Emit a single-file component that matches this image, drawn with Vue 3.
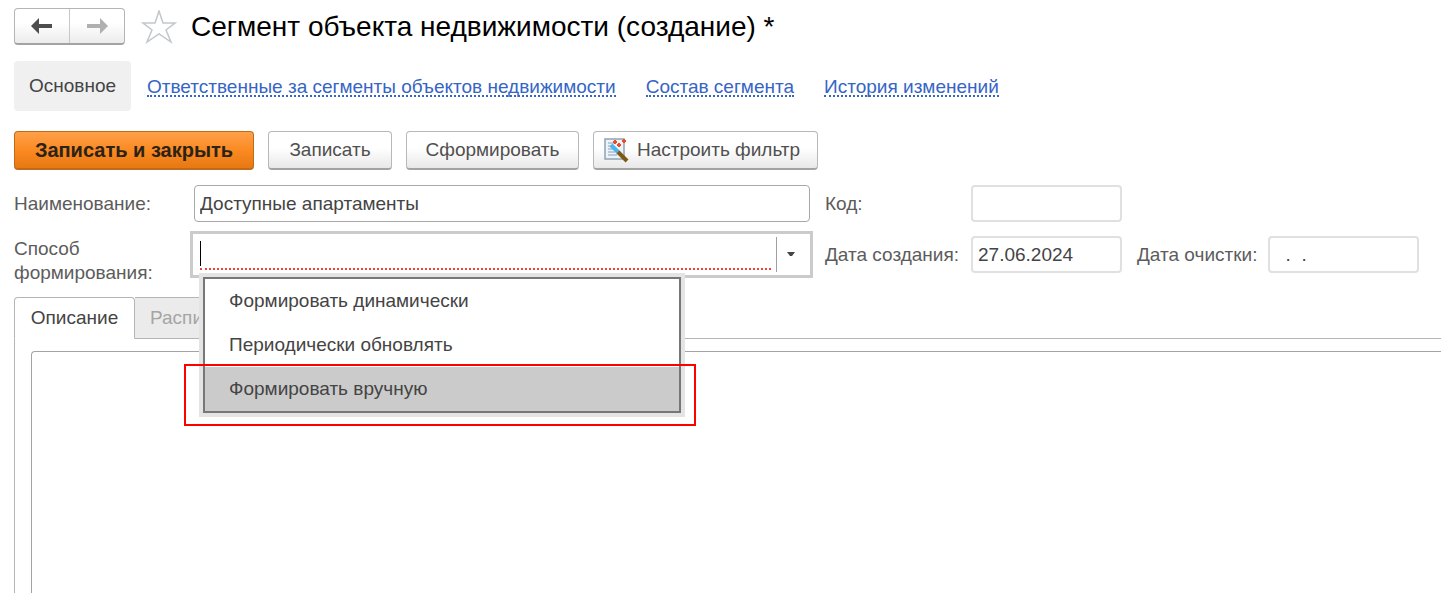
<template>
  <div class="form-page">
    <header class="title-bar">
      <div class="history-buttons">
        <button type="button" class="history-btn" aria-label="Назад">
          <svg width="22" height="18" viewBox="0 0 22 18">
            <path d="M0 9 L8 1 V7 H21 V11 H8 V17 Z" fill="#4d4d4d" />
          </svg>
        </button>
        <button type="button" class="history-btn" aria-label="Вперед">
          <svg width="22" height="18" viewBox="0 0 22 18">
            <path d="M22 9 L14 1 V7 H1 V11 H14 V17 Z" fill="#b0b0b0" />
          </svg>
        </button>
      </div>
      <button type="button" class="star-btn" aria-label="Добавить в избранное">
        <svg width="36" height="34" viewBox="0 0 36 34">
          <path
            d="M18 1 L22 13 H34 L25 20 L30 32 L18 24 L6 32 L11 20 L2 13 H14 Z"
            fill="#fff" stroke="#c3c7cb" stroke-width="1.500"
          />
        </svg>
      </button>
      <h1 class="title">Сегмент объекта недвижимости (создание) *</h1>
    </header>

    <nav class="sections">
      <a href="#" class="section-current">Основное</a>
      <a v-for="link in links" :key="link" href="#" class="section-link">{{ link }}</a>
    </nav>

    <div class="toolbar">
      <button type="button" class="btn btn-primary">Записать и закрыть</button>
      <button type="button" class="btn btn-write">Записать</button>
      <button type="button" class="btn btn-build">Сформировать</button>
      <button type="button" class="btn btn-filter">
        <svg width="26" height="26" viewBox="0 0 26 26">
          <rect x="2" y="2" width="19" height="20" fill="#eef3f7" stroke="#8fa3b5" stroke-width="1.500" />
          <path d="M5 6H11M5 9H9M5 12H10M5 15H12M5 18H14" stroke="#a9bccb" stroke-width="1.500" />
          <path d="M8 8 L16 16" stroke="#4fb4ee" stroke-width="4" />
          <path d="M15 15 L24 24" stroke="#7d5a14" stroke-width="4" />
          <path d="M12 3V7M10 5H14M21 2V6M19 4H23M16 6V10M14 8H18" stroke="#f04a24" stroke-width="2" />
        </svg>
        <span>Настроить фильтр</span>
      </button>
    </div>

    <div class="fields">
      <label for="name" class="label">Наименование:</label>
      <input id="name" v-model="name" type="text" class="field field-name">
      <label for="code" class="label label-inner">Код:</label>
      <input id="code" type="text" class="field field-light field-code">

      <label for="method" class="label label-method">Способ формирования:</label>
      <div class="combo">
        <span class="combo-caret"></span>
        <input
          id="method" v-model="method" type="text" class="combo-input"
          role="combobox" aria-expanded="true" aria-controls="method-list"
        >
        <button type="button" class="combo-toggle" aria-label="Выбрать">
          <svg width="8" height="5" viewBox="0 0 8 5">
            <path d="M0 0H8L5 4H3Z" fill="#444" />
          </svg>
        </button>
        <ul id="method-list" class="menu" role="listbox">
          <li
            v-for="(option, i) in options" :key="option" role="option"
            class="menu-item" :class="{ active: i === activeIndex }"
            :aria-selected="i === activeIndex" @click="method = option"
          >
            {{ option }}
            <span v-if="i === activeIndex" class="highlight"></span>
          </li>
        </ul>
      </div>
      <label for="created" class="label label-inner">Дата создания:</label>
      <input id="created" v-model="created" type="text" class="field field-light">
      <label for="cleared" class="label label-inner">Дата очистки:</label>
      <input id="cleared" v-model="cleared" type="text" class="field field-light">
    </div>

    <div class="tabs" role="tablist">
      <button type="button" class="tab tab-active" role="tab" aria-selected="true">Описание</button>
      <button type="button" class="tab" role="tab" aria-selected="false">Расписание</button>
      <div class="tabs-line"></div>
    </div>
    <div class="tab-panel" role="tabpanel">
      <textarea class="description" aria-label="Описание"></textarea>
    </div>
  </div>
</template>

<script setup>
import { ref } from 'vue'

const links = [
  'Ответственные за сегменты объектов недвижимости',
  'Состав сегмента',
  'История изменений'
]

const options = [
  'Формировать динамически',
  'Периодически обновлять',
  'Формировать вручную'
]

const activeIndex = 2
const name = ref('Доступные апартаменты')
const method = ref('')
const created = ref('27.06.2024')
const cleared = ref('  .  .')
</script>

<style>
body {
  margin: 0;
  background: #fff;
}
</style>

<style scoped>
.form-page,
.form-page * {
  box-sizing: border-box;
}

.form-page {
  display: flex;
  flex-direction: column;
  min-height: 100vh;
  padding: 8px 0 0 14px;
  font-family: "Liberation Sans", Arial, sans-serif;
  font-size: 19px;
  line-height: 24px;
  color: #444;
}

button,
input,
textarea {
  font: inherit;
  color: inherit;
}

.title-bar {
  display: flex;
  align-items: center;
  height: 37px;
}

.history-buttons {
  display: flex;
  width: 111px;
  height: 37px;
  border: 1px solid #b5b5b5;
  border-bottom: 2px solid #a3a3a3;
  border-radius: 4px;
  background: linear-gradient(#fff 40%, #ececec);
}

.history-btn {
  display: flex;
  flex: 1;
  align-items: center;
  justify-content: center;
  padding: 0;
  border: 0;
  background: none;
}

.history-btn + .history-btn {
  border-left: 1px solid #c8c8c8;
}

.star-btn {
  display: flex;
  margin: 0 14px 0 16px;
  padding: 0;
  border: 0;
  background: none;
}

.title {
  margin: 0;
  font-size: 28px;
  font-weight: normal;
  line-height: 36px;
  color: #000;
}

.sections {
  display: flex;
  align-items: center;
  gap: 30px;
  margin-top: 16px;
}

.section-current {
  width: 117px;
  margin-right: -14px;
  padding: 13px 0;
  border-radius: 4px;
  background: #f0f0f0;
  color: #444;
  text-align: center;
  text-decoration: none;
}

.section-link {
  margin-top: 2px;
  border-bottom: 2px dotted #3565c5;
  line-height: 17px;
  color: #3565c5;
  text-decoration: none;
}

.toolbar {
  display: flex;
  gap: 14px;
  margin-top: 20px;
}

.btn {
  display: flex;
  align-items: center;
  justify-content: center;
  height: 39px;
  padding: 0;
  border: 1px solid #b8b8b8;
  border-bottom: 2px solid #a3a3a3;
  border-radius: 4px;
  background: linear-gradient(#fff 45%, #e8e8e8);
  color: #505050;
  white-space: nowrap;
}

.btn-primary {
  width: 240px;
  border-color: #c06a1c;
  background: linear-gradient(#ffa04a, #fb8a22 50%, #e87812);
  color: #2b2218;
  font-size: 20px;
  font-weight: bold;
}

.btn-write {
  width: 124px;
}

.btn-build {
  width: 173px;
}

.btn-filter {
  justify-content: flex-start;
  gap: 8px;
  width: 225px;
  padding-left: 9px;
}

.fields {
  display: grid;
  grid-template-columns: 180px 1fr 161px 151px 146px 151px;
  grid-template-rows: 37px 47px;
  row-gap: 9px;
  align-items: center;
  margin-top: 15px;
  padding-right: 22px;
}

.label {
  color: #5c5c5c;
}

.label-inner {
  padding-left: 15px;
}

.label-method {
  width: 140px;
  padding-top: 12px;
}

.field {
  width: 100%;
  min-width: 0;
  height: 37px;
  padding: 0 5px;
  border: 1px solid #a8a8a8;
  border-radius: 4px;
  background: #fff;
  outline: none;
}

.field-light {
  border: 2px solid #e0e0e0;
}

.field-code {
  grid-column: 4 / 7;
  width: 151px;
}

/* the focus frame is wider than the plain field on both sides */
.combo {
  position: relative;
  display: flex;
  align-items: center;
  height: 47px;
  margin: 0 -3px 0 -4px;
  padding: 0 0 0 7px;
  border: 3px solid #cbcbcb;
}

.combo-caret {
  position: absolute;
  left: 7px;
  top: 7px;
  width: 1px;
  height: 25px;
  background: #000;
}

.combo-input {
  flex: 1;
  min-width: 0;
  height: 31px;
  padding: 0;
  border: 0;
  border-bottom: 2px dotted #f04040;
  background: none;
  outline: none;
}

.combo-toggle {
  display: flex;
  align-items: center;
  justify-content: center;
  width: 34px;
  height: 35px;
  margin-left: 5px;
  padding: 0 5px 0 0;
  border: 0;
  border-left: 1px solid #a0a0a0;
  background: none;
}

.menu {
  position: absolute;
  z-index: 2;
  left: 10px;
  top: 43px;
  width: 478px;
  margin: 0;
  padding: 0;
  border: 2px solid #777;
  background: #fff;
  box-shadow: 0 0 0 4px #e4e4e4;
  list-style: none;
}

.menu-item {
  position: relative;
  padding: 10px 24px;
}

.menu-item.active {
  background: #cbcbcb;
}

.highlight {
  position: absolute;
  left: -21px;
  right: -17px;
  top: -3px;
  bottom: -15px;
  border: 2px solid #f00;
}

.tabs {
  display: flex;
  margin-top: 19px;
}

.tab {
  height: 42px;
  padding: 0 15px;
  border: 1px solid #b5b5b5;
  border-left: 0;
  border-radius: 0 4px 0 0;
  background: #ebebeb;
  color: #a5a5a5;
}

.tab-active {
  width: 121px;
  padding: 0;
  border-left: 1px solid #b5b5b5;
  border-bottom-color: #fff;
  border-radius: 4px 4px 0 0;
  background: #fff;
  color: #444;
}

.tabs-line {
  flex: 1;
  border-bottom: 1px solid #b5b5b5;
}

.tab-panel {
  display: flex;
  flex: 1;
  padding: 12px 0 0 16px;
  border-left: 1px solid #b5b5b5;
}

.description {
  flex: 1;
  padding: 8px;
  border: 1px solid #a3a3a3;
  border-right: 0;
  border-bottom: 0;
  border-radius: 4px 0 0 0;
  outline: none;
  resize: none;
}
</style>
